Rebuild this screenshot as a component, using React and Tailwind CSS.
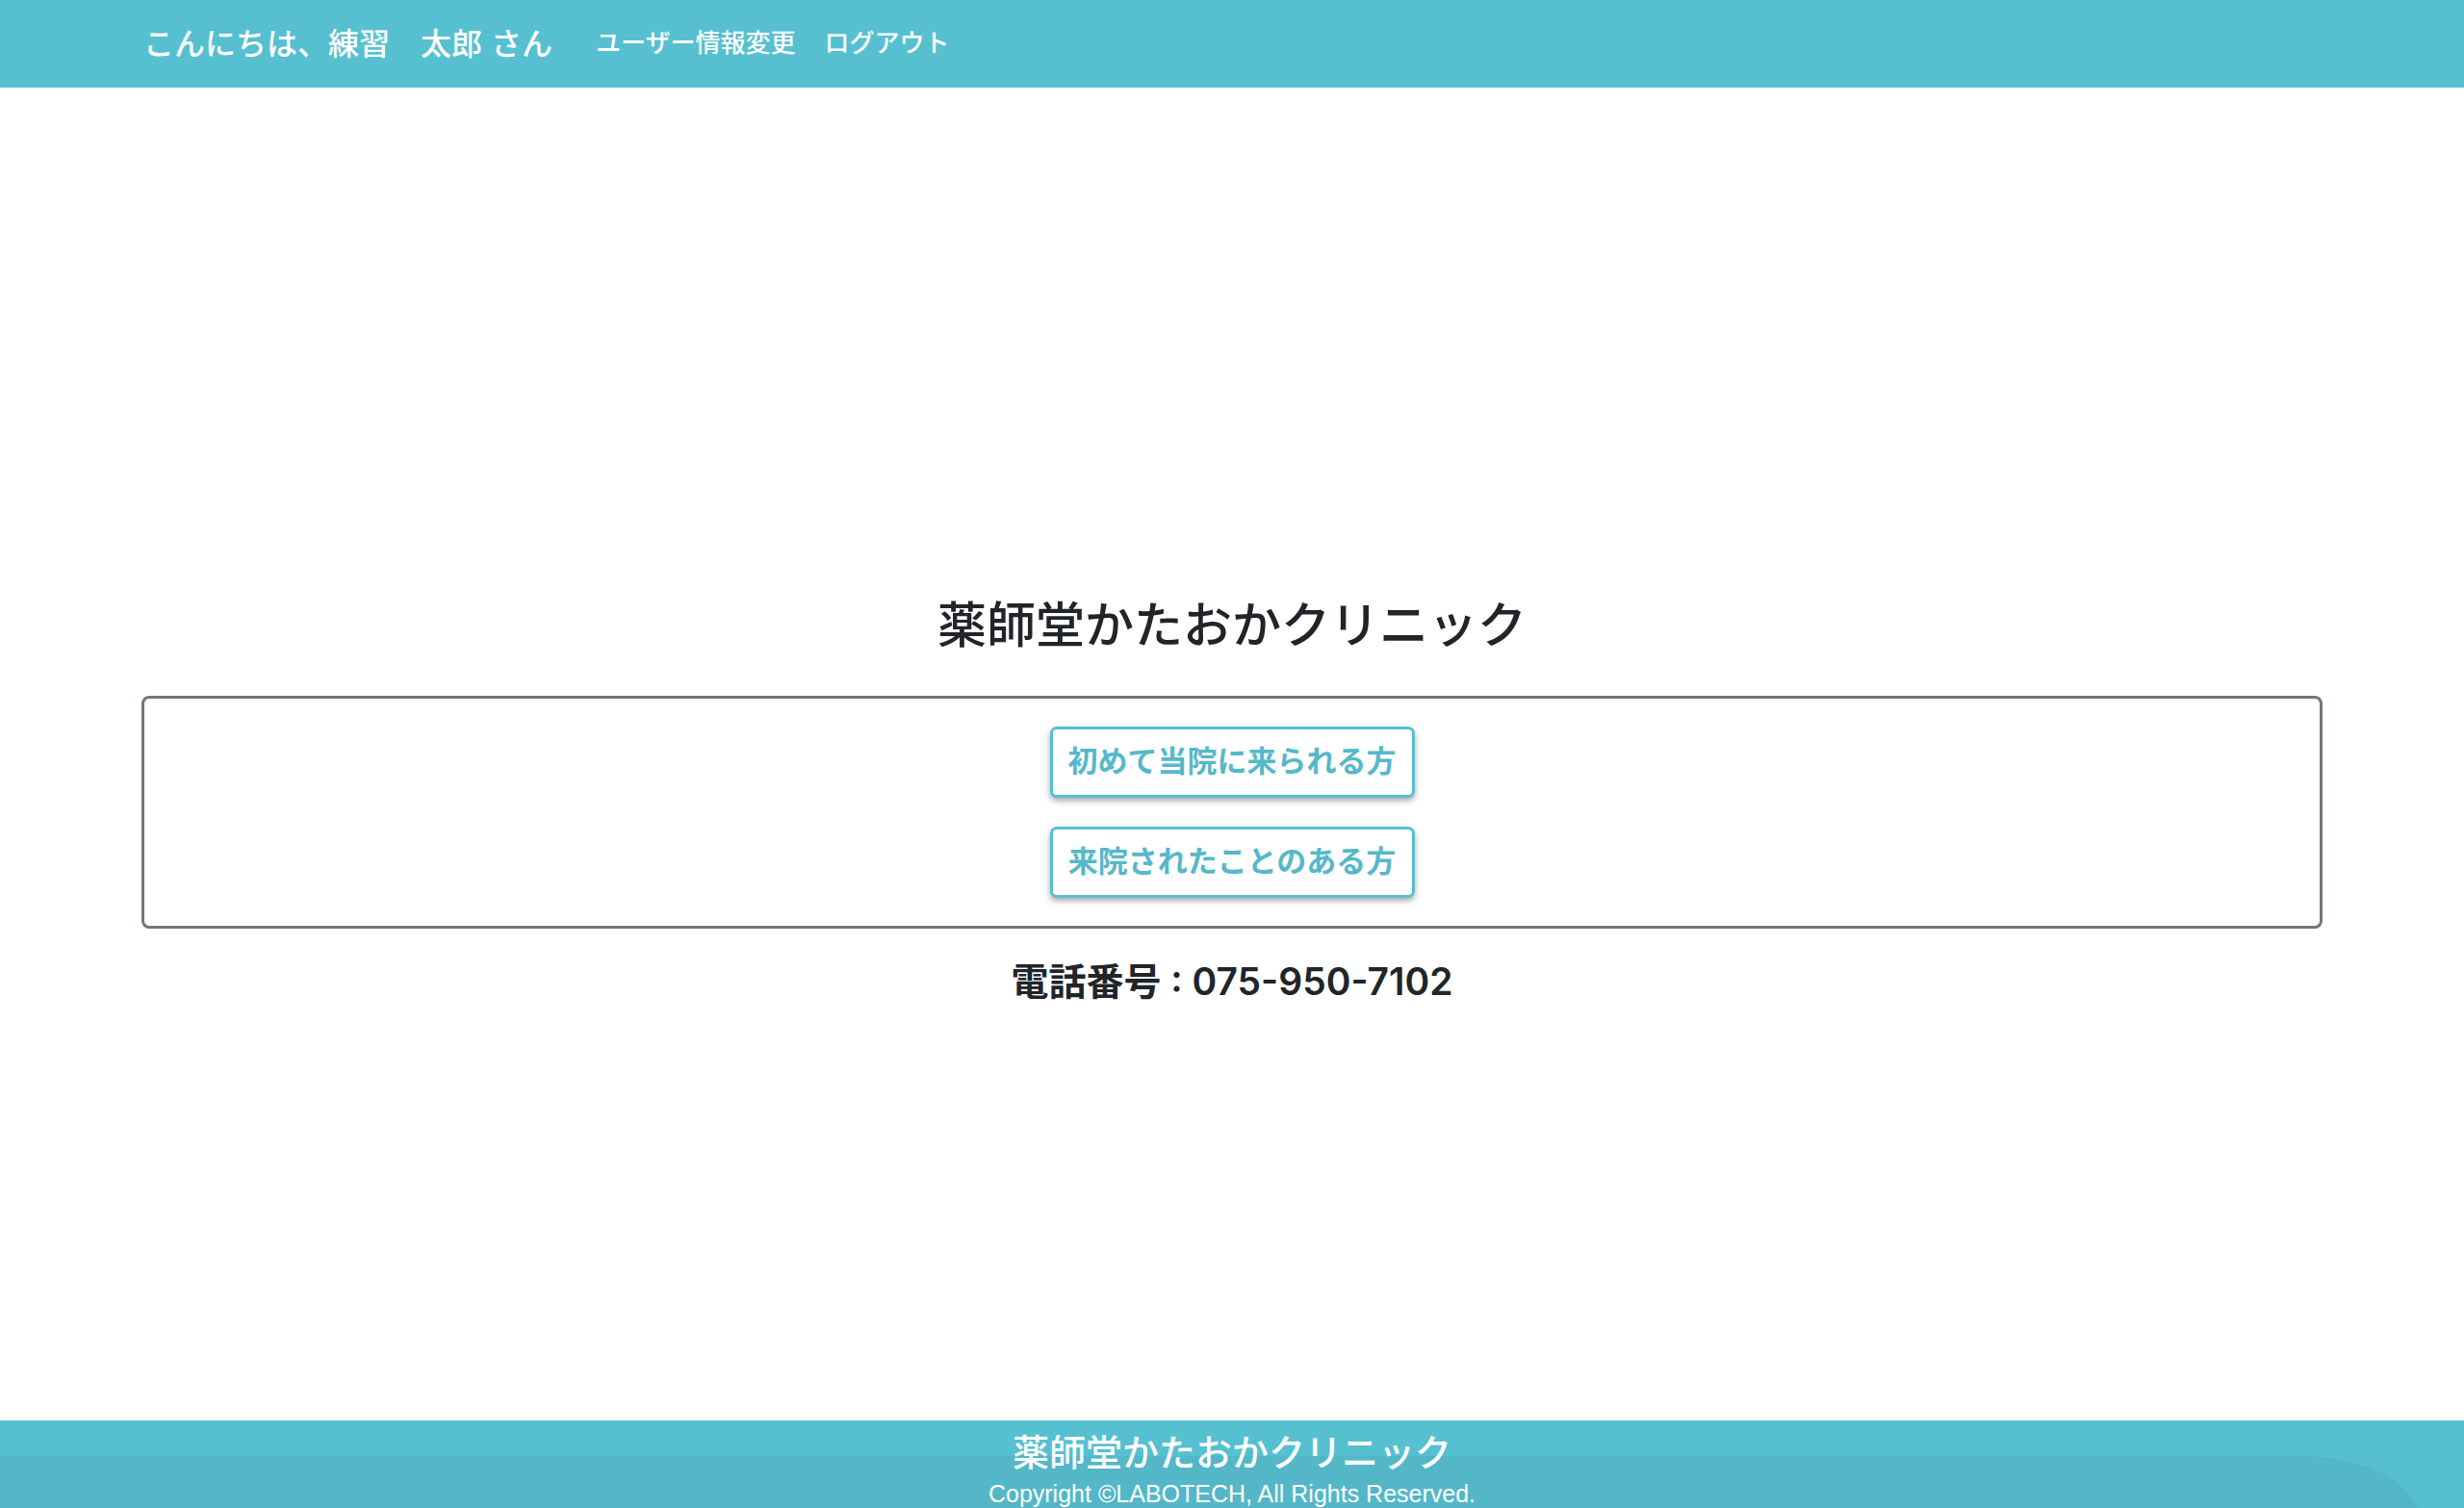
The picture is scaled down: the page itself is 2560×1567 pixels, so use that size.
import React from "react";

const jp = { fontFamily: '"Liberation Sans", "Noto Sans CJK JP", sans-serif' };
const phoneFont = { fontFamily: 'Inter, "Noto Sans CJK JP", sans-serif' };

function Header() {
  return (
    <header className="h-[91px] bg-[#56c0d1] flex items-center">
      <div className="pl-[149px] flex items-center text-white">
        <span className="text-[32px] font-medium">こんにちは、練習　太郎 さん</span>
        <nav className="flex items-center ml-[30px]">
          <a className="px-[15px] text-[26px] font-medium">ユーザー情報変更</a>
          <a className="px-[15px] text-[26px] font-medium">ログアウト</a>
        </nav>
      </div>
    </header>
  );
}

function Footer() {
  return (
    <footer className="relative h-[91px] bg-[#56c0d1] overflow-hidden text-white">
      {/* wave drawn behind the footer text */}
      <svg
        className="absolute inset-0 w-full h-full"
        viewBox="0 0 2560 91"
        preserveAspectRatio="none"
      >
        <path
          d="M0 37 L 2400 37 C 2460 40, 2498 62, 2512 91 L 0 91 Z"
          fill="#53b7c8"
        />
      </svg>
      <div className="relative flex flex-col items-center pt-[11px]">
        <p className="text-[38px] leading-[46px] font-medium">薬師堂かたおかクリニック</p>
        <p className="text-[25px] leading-[38px]">Copyright ©LABOTECH, All Rights Reserved.</p>
      </div>
    </footer>
  );
}

export default function App() {
  return (
    <div className="min-h-screen bg-white text-[#212529]" style={jp}>
      <Header />
      <main className="h-[1385px] px-[147px] pt-[529px]">
        <h2 className="text-center text-[51px] leading-[61px] font-medium">
          薬師堂かたおかクリニック
        </h2>
        <div className="mt-[42px] border-[3px] border-[#6e777f] rounded-[8px] py-[29px] flex flex-col items-center gap-[30px]">
          <button className="w-[379px] h-[74px] border-[3px] border-[#56c0d1] rounded-[7px] bg-white text-[#56b8ca] text-[31px] font-semibold shadow-[0_3px_6px_rgba(0,0,0,0.35)]">
            初めて当院に来られる方
          </button>
          <button className="w-[379px] h-[74px] border-[3px] border-[#56c0d1] rounded-[7px] bg-white text-[#56b8ca] text-[31px] font-semibold shadow-[0_3px_6px_rgba(0,0,0,0.35)]">
            来院されたことのある方
          </button>
        </div>
        <p className="mt-[32px] text-center text-[39px] leading-[46px] font-semibold" style={phoneFont}>
          電話番号 : 075-950-7102
        </p>
      </main>
      <Footer />
    </div>
  );
}
